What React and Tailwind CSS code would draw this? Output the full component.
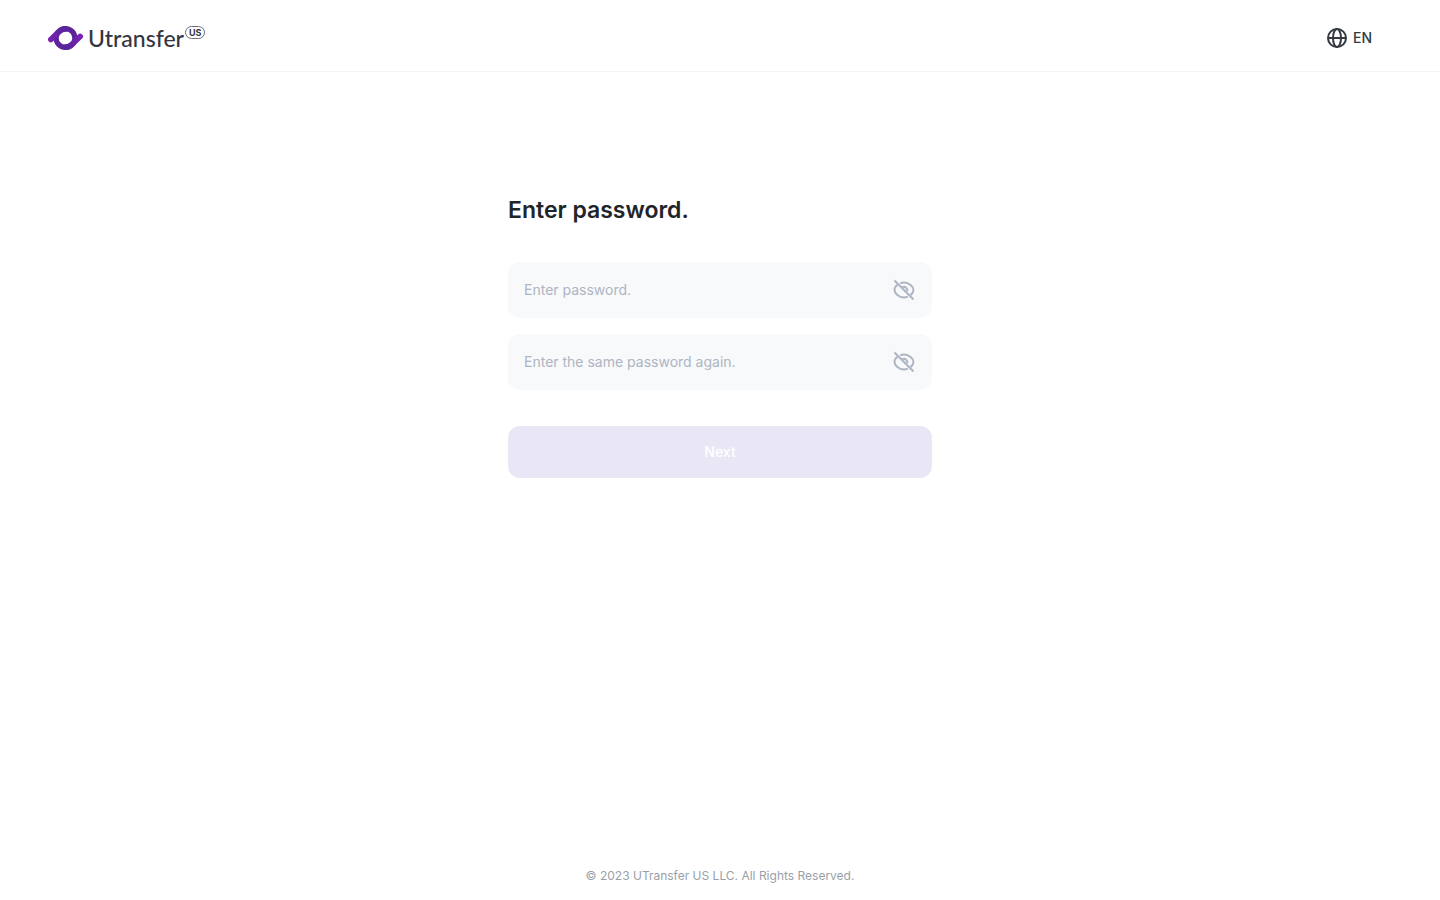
import React, { useState } from 'react';

const EyeOffIcon = () => (
    <svg className="w-6 h-6" viewBox="0 0 24 24" fill="none" stroke="currentColor" strokeWidth="2">
        <path d="M8.2 5.3C9.4 4.8 10.7 4.5 12 4.5c5 0 9.5 4 9.5 7.5 0 1.8-1.2 3.7-3 5.2" />
        <path d="M5.5 6.8C3.7 8.2 2.5 10.2 2.5 12c0 3.5 4.5 7.5 9.5 7.5 1.4 0 2.7-.3 3.900-.8" />
        <path d="M9.800 9.300c2.800-1.700 6 .6 5.400 3.900" />
        <path d="M2.500 2.500l19 19" />
    </svg>
);

const EyeIcon = () => (
    <svg className="w-6 h-6" viewBox="0 0 24 24" fill="none" stroke="currentColor" strokeWidth="2">
        <ellipse cx="12" cy="12" rx="9.5" ry="7.5" />
        <circle cx="12" cy="12" r="3" />
    </svg>
);

const GlobeIcon = () => (
    <svg className="w-6 h-6" viewBox="0 0 24 24" fill="none" stroke="currentColor" strokeWidth="2">
        <circle cx="12" cy="12" r="9" />
        <ellipse cx="12" cy="12" rx="4" ry="9" />
        <path d="M3 12h18" />
    </svg>
);

const LogoMark = () => (
    <svg className="w-9 h-6" viewBox="0 0 36 24" fill="none">
        <defs>
            <linearGradient id="arm-left" x1="0" y1="16" x2="18" y2="2" gradientUnits="userSpaceOnUse">
                <stop stopColor="#7e22b5" />
                <stop offset="1" stopColor="#55259b" />
            </linearGradient>
            <linearGradient id="arm-right" x1="35" y1="8" x2="18" y2="22" gradientUnits="userSpaceOnUse">
                <stop stopColor="#7e22b5" />
                <stop offset="1" stopColor="#55259b" />
            </linearGradient>
        </defs>
        <circle cx="17.5" cy="12" r="9.4" stroke="#5b2499" strokeWidth="5.2" />
        <path d="M2.900 13.500L10.900 5.800Q13.700 2.900 17.500 2.900" stroke="url(#arm-left)" strokeWidth="5.800" strokeLinecap="round" />
        <path d="M32.100 10.500L24.100 18.200Q21.300 21.100 17.500 21.100" stroke="url(#arm-right)" strokeWidth="5.800" strokeLinecap="round" />
    </svg>
);

const PasswordField = ({ id, label, value, onChange }) => {
    const [visible, setVisible] = useState(false);

    return (
        <div className="flex items-center h-14 px-4 rounded-xl bg-[#f8f9fb]">
            <input
                id={id}
                type={visible ? 'text' : 'password'}
                value={value}
                onChange={(e) => onChange(e.target.value)}
                placeholder={label}
                aria-label={label}
                className="flex-1 min-w-0 bg-transparent text-sm text-[#212529] placeholder:text-[#adb5c2] outline-none"
            />
            <button
                type="button"
                onClick={() => setVisible(!visible)}
                aria-label={visible ? 'Hide password' : 'Show password'}
                className="text-[#adb5c2] cursor-pointer"
            >
                {visible ? <EyeIcon /> : <EyeOffIcon />}
            </button>
        </div>
    );
};

const App = () => {
    const [password, setPassword] = useState('');
    const [confirm, setConfirm] = useState('');

    const canContinue = password.length > 0 && password === confirm;

    return (
        <div className="min-h-screen flex flex-col bg-white font-['Inter',sans-serif] text-[#212529]">
            {/* Header */}
            <header className="flex items-center justify-between h-18 px-12 border-b border-[#f1f3f5]">
                <a href="#" className="flex items-center mt-1 text-[#343542]">
                    <LogoMark />
                    <span className="ml-1 font-['Lato',sans-serif] text-[23px] leading-6 font-medium">Utransfer</span>
                    <span className="self-start ml-px px-[3px] rounded-full border border-[#6c6d78] text-[9px] leading-[11px] font-bold">US</span>
                </a>
                <button type="button" className="flex items-center gap-1 mr-5 mt-1 text-sm font-medium text-[#343a40] cursor-pointer">
                    <GlobeIcon />
                    EN
                </button>
            </header>

            {/* Password form */}
            <main className="flex-1 w-full max-w-[456px] mx-auto px-4 pt-30">
                <h1 className="text-[23px] leading-9 font-semibold">Enter password.</h1>
                <form className="mt-8.5" onSubmit={(e) => e.preventDefault()}>
                    <div className="flex flex-col gap-4">
                        <PasswordField id="password" label="Enter password." value={password} onChange={setPassword} />
                        <PasswordField id="confirm" label="Enter the same password again." value={confirm} onChange={setConfirm} />
                    </div>
                    <button
                        type="submit"
                        disabled={!canContinue}
                        className="w-full h-13 mt-9 rounded-xl bg-[#5f259f] disabled:bg-[#e9e6f5] text-sm font-medium text-white"
                    >
                        Next
                    </button>
                </form>
            </main>

            <footer className="pb-4 text-center text-xs leading-4 text-[#9a9fa8]">
                © 2023 UTransfer US LLC. All Rights Reserved.
            </footer>
        </div>
    );
};

export default App;
